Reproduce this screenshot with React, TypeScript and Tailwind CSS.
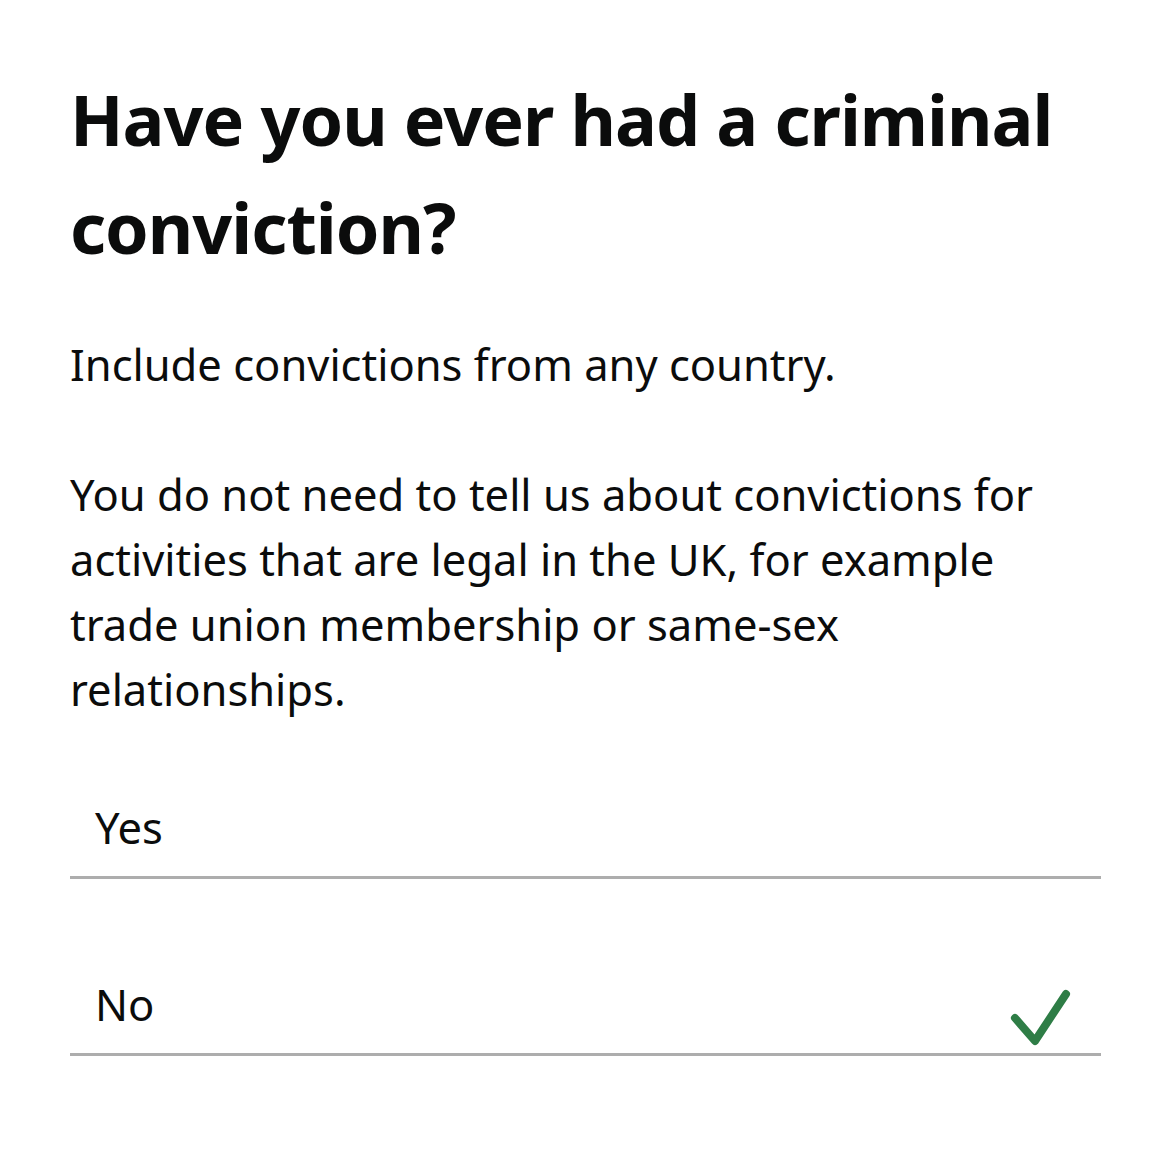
import React from "react";

export default function App() {
  return (
    <div className="min-h-[1165px] w-[1170px] bg-white text-[#0b0c0c]" style={{ fontFamily: '"Noto Sans", Arial, sans-serif' }}>
      <div className="pl-[70px] pr-[69px] pt-[65px]">
        <h1 className="text-[70px] leading-[108px] font-bold tracking-[-1px]">
          Have you ever had a criminal conviction?
        </h1>
        <p className="mt-[51px] text-[43.5px] leading-[65px]">Include convictions from any country.</p>
        <p className="mt-[65px] text-[43.5px] leading-[65px]">
          You do not need to tell us about convictions for activities that are legal in the UK, for example trade union membership or same-sex relationships.
        </p>
        <div className="mt-[73px]">
          <div className="flex items-start justify-between border-b-[3px] border-[#adadad] pb-[16px] pl-[25px] pr-[26px]">
            <span className="text-[43.5px] leading-[65px]">Yes</span>
          </div>
          <div className="flex items-start justify-between border-b-[3px] border-[#adadad] pt-[93px] pb-[16px] pl-[25px] pr-[26px]">
            <span className="text-[43.5px] leading-[65px]">No</span>
            <svg width="70" height="65" viewBox="0 0 70 65" overflow="visible">
              <path d="M10 46 L30 69 L61 22" fill="none" stroke="#2e7d46" strokeWidth="8" strokeLinecap="round" strokeLinejoin="round" />
            </svg>
          </div>
        </div>
      </div>
    </div>
  );
}
